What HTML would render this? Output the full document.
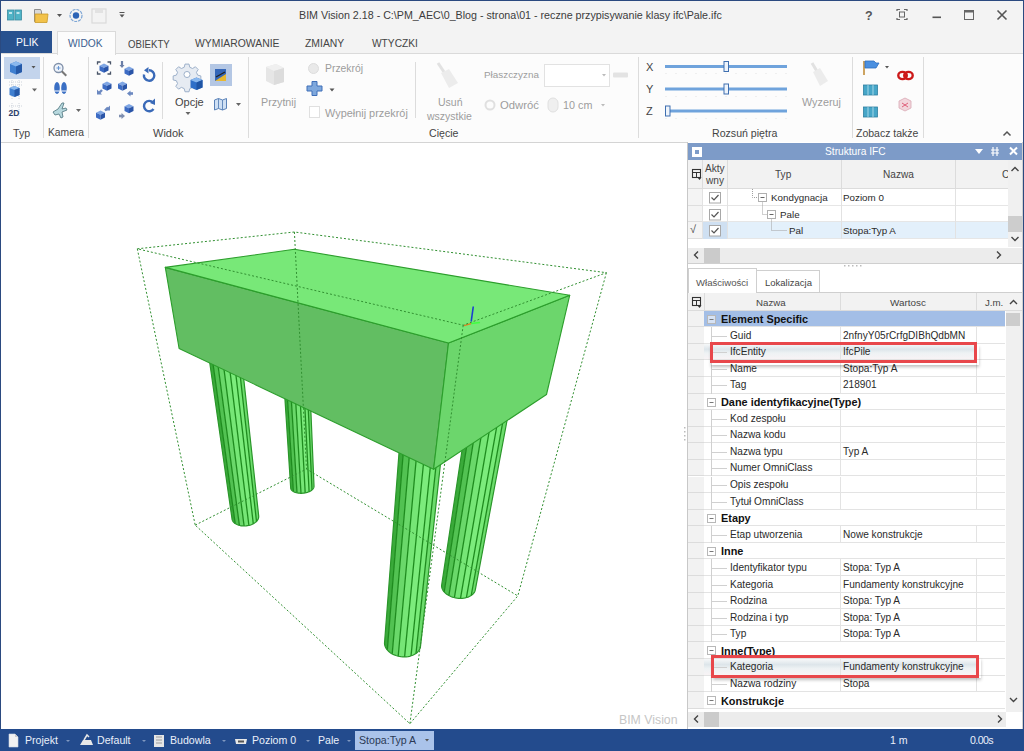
<!DOCTYPE html>
<html><head><meta charset="utf-8">
<style>
*{margin:0;padding:0;box-sizing:border-box}
html,body{width:1024px;height:751px;overflow:hidden;background:#fff;font-family:"Liberation Sans",sans-serif;color:#444}
.a{position:absolute;white-space:nowrap}
svg{position:absolute;overflow:visible}
.tab{position:absolute;top:38px;font-size:10.6px;color:#444;line-height:12px}
.gl{position:absolute;top:127px;font-size:10.6px;color:#444;line-height:12px}
.rt{position:absolute;font-size:10.6px;line-height:12px;color:#444;white-space:nowrap}
.dis{color:#9c9c9c}
.sep{position:absolute;width:1px;background:#dcdcdc}
.g{position:absolute;font-size:10.1px;line-height:12px;color:#2a2a2a;white-space:nowrap}
.gb{position:absolute;font-size:10.9px;line-height:12px;color:#111;font-weight:bold;white-space:nowrap}
.hl{position:absolute;height:1px;background:#e4e4e4}
.vl{position:absolute;width:1px;background:#e4e4e4}
</style></head><body>
<!-- title bar -->
<div class="a" style="left:0;top:0;width:1024px;height:31px;background:#f3f3f3"></div>
<div class="a" style="left:0;top:0;width:1024px;height:1px;background:#2b4a80"></div>
<div class="a" style="left:299px;top:9px;font-size:10.7px;line-height:12px;color:#3c3c3c">BIM Vision 2.18 - C:\PM_AEC\0_Blog - strona\01 - reczne przypisywanie klasy ifc\Pale.ifc</div>
<!-- QAT icons -->
<svg style="left:0;top:0" width="140" height="31">
 <rect x="7.5" y="10" width="6.5" height="10" fill="#4fb3c6" stroke="#3a8aa0" stroke-width="0.8"/>
 <rect x="15" y="10" width="6.5" height="10" fill="#4fb3c6" stroke="#3a8aa0" stroke-width="0.8"/>
 <rect x="9" y="12" width="3" height="2" fill="#bfe6ee"/><rect x="16.5" y="12" width="3" height="2" fill="#bfe6ee"/>
 <path d="M34.5 9.5h6l1 2v10h-7z" fill="#d9d9d9" stroke="#777" stroke-width="0.8"/>
 <path d="M35 14h13l-1 8.5h-12z" fill="#f2c24a" stroke="#c99a2a" stroke-width="0.8"/>
 <path d="M57 14h5l-2.5 3z" fill="#555"/>
 <circle cx="76" cy="15.5" r="6" fill="none" stroke="#7fa7d6" stroke-width="1.2" stroke-dasharray="3 1"/>
 <circle cx="76" cy="15.5" r="3.2" fill="#2b63b6"/>
 <rect x="92" y="9" width="14" height="14" fill="none" stroke="#dadada" stroke-width="1.2"/>
 <rect x="95" y="9" width="8" height="4" fill="#e2e2e2"/>
 <path d="M119.5 12.5h5" stroke="#555" stroke-width="1"/><path d="M119.5 14.5h5l-2.5 3z" fill="#555"/>
</svg>
<!-- window controls -->
<svg style="left:860px;top:6px" width="160" height="20">
 <text x="5" y="13.5" font-family="Liberation Sans" font-weight="bold" font-size="12.5" fill="#555">?</text>
 <path d="M37 5v-1.5h3M44 3.5h3v1.5M47 12v1.5h-3M40 13.5h-3V12" fill="none" stroke="#666" stroke-width="1.2"/>
 <rect x="39.5" y="6" width="5" height="5" fill="none" stroke="#666" stroke-width="1"/>
 <rect x="72.5" y="10.5" width="8.5" height="1.6" fill="#555"/>
 <rect x="104.5" y="4.5" width="9" height="9" fill="none" stroke="#666" stroke-width="1"/>
 <rect x="104.5" y="4.5" width="9" height="2" fill="#666"/>
 <path d="M137.5 4.5l9 9M146.5 4.5l-9 9" stroke="#555" stroke-width="1.6"/>
</svg>
<!-- tab row -->
<div class="a" style="left:0;top:31px;width:1024px;height:22px;background:#f3f3f3"></div>
<div class="a" style="left:0;top:31px;width:52px;height:23px;background:#28518f"></div>
<div class="tab" style="left:16px;top:36.5px;color:#fff;font-size:10.4px">PLIK</div>
<!-- ribbon body -->
<div class="a" style="left:0;top:53px;width:1024px;height:90px;background:#fcfcfc;border-top:1px solid #dadada;border-bottom:1px solid #d4d4d4"></div>
<div class="a" style="left:57px;top:31px;width:59px;height:24px;background:#fcfcfc;border:1px solid #dadada;border-bottom:none"></div>
<div class="tab" style="left:68px;color:#3d5f90;font-size:10.2px">WIDOK</div>
<div class="tab" style="left:128px;font-size:11px;transform:scaleX(0.875);transform-origin:0 0">OBIEKTY</div>
<div class="tab" style="left:195px;font-size:10.4px">WYMIAROWANIE</div>
<div class="tab" style="left:305px;font-size:10.4px">ZMIANY</div>
<div class="tab" style="left:372px;font-size:10.2px">WTYCZKI</div>
<!-- ribbon separators -->
<div class="sep" style="left:43px;top:57px;height:81px"></div>
<div class="sep" style="left:88px;top:57px;height:81px"></div>
<div class="sep" style="left:162px;top:62px;height:57px"></div>
<div class="sep" style="left:248px;top:57px;height:81px"></div>
<div class="sep" style="left:415px;top:62px;height:56px"></div>
<div class="sep" style="left:638px;top:57px;height:81px"></div>
<div class="sep" style="left:852px;top:57px;height:81px"></div>
<div class="sep" style="left:923px;top:57px;height:81px"></div>
<!-- group labels -->
<div class="gl" style="left:13px">Typ</div>
<div class="gl" style="left:48px;font-size:10.3px">Kamera</div>
<div class="gl" style="left:153px;font-size:11px">Widok</div>
<div class="gl" style="left:429px">Cięcie</div>
<div class="gl" style="left:712px">Rozsuń piętra</div>
<div class="gl" style="left:856px;font-size:10.5px">Zobacz także</div>
<svg style="left:1000px;top:128px" width="14" height="10"><path d="M3.5 7.5l3.5-3.5 3.5 3.5" fill="none" stroke="#555" stroke-width="1.5"/></svg>
<!-- Typ group -->
<div class="a" style="left:4px;top:57px;width:36px;height:22px;background:#c3d4ec"></div>
<svg style="left:0;top:55px" width="90" height="70">
 <defs>
  <linearGradient id="cb" x1="0" y1="0" x2="1" y2="1"><stop offset="0" stop-color="#7fb0ea"/><stop offset="1" stop-color="#1f5fb5"/></linearGradient>
 </defs>
 <!-- cube 1 -->
 <path d="M10 9l6-2.5 6 2.5v8l-6 2.5-6-2.5z" fill="#3f7fd0"/>
 <path d="M10 9l6-2.5 6 2.5-6 2.5z" fill="#8ab8ee"/>
 <path d="M16 11.5v8l6-2.5v-8z" fill="#2559a8"/>
 <path d="M31.5 11h4l-2 2.5z" fill="#555"/>
 <!-- cube 2 with grid -->
 <path d="M9 27h13M9 30h13M12 25v20M19 25v20" stroke="#b0b8c8" stroke-width="0.6" stroke-dasharray="1 1"/>
 <path d="M9.5 33l5-2 5 2v7l-5 2-5-2z" fill="#3f7fd0"/>
 <path d="M9.5 33l5-2 5 2-5 2z" fill="#8ab8ee"/>
 <path d="M14.5 35v7l5-2v-7z" fill="#2559a8"/>
 <path d="M32 33.5h5l-2.5 3z" fill="#666"/>
 <!-- 2D -->
 <path d="M9 51h13M12 48v14M19 48v14" stroke="#b0b8c8" stroke-width="0.6" stroke-dasharray="1 1"/>
 <text x="8.5" y="61" font-family="Liberation Sans" font-weight="bold" font-size="8.5" fill="#2a3f6a">2D</text>
 <!-- Kamera -->
 <circle cx="58.5" cy="13" r="4.5" fill="#eef3fa" stroke="#7f8fa8" stroke-width="1.3"/>
 <path d="M61.8 16.3l4.5 4.5" stroke="#777" stroke-width="2"/>
 <path d="M56.5 13h4M58.5 11v4" stroke="#5a8fd0" stroke-width="0.9"/>
 <ellipse cx="57" cy="33" rx="2.8" ry="6" fill="#3a6fc4"/>
 <ellipse cx="64" cy="33" rx="2.8" ry="6" fill="#3a6fc4"/>
 <path d="M54.5 36h5M61.5 36h5" stroke="#fff" stroke-width="1"/>
 <path d="M53 57l5-3 4-6 2 0-2 6 4-1 1 2-5 2 1 5-2 1-2-4-4 1z" fill="#b7d8de" stroke="#5a7f88" stroke-width="0.9"/>
 <path d="M76 54h5l-2.5 3z" fill="#666"/>
</svg>
<!-- Widok group icons -->
<svg style="left:0;top:0" width="260" height="140">
 <defs>
  <g id="cu"><path d="M-4.5 -2.3L0 -4.5L4.5 -2.3L0 -0.2Z" fill="#7fa6e4"/><path d="M-4.5 -2.3L0 -0.2V4.8L-4.5 2.6Z" fill="#3d6cc4"/><path d="M0 -0.2L4.5 -2.3V2.6L0 4.8Z" fill="#2a55a8"/></g>
 </defs>
 <path d="M97.5 64.5v-2.5h3M107.5 62h3v2.5M110.5 71.5v2.5h-3M100.5 74h-3v-2.5" fill="none" stroke="#4a5568" stroke-width="1.3"/>
 <use href="#cu" x="104" y="68"/>
 <path d="M122 61v5" stroke="#6b7fa8" stroke-width="2.2"/><path d="M119.5 65h5l-2.5 3z" fill="#6b7fa8"/>
 <use href="#cu" x="129" y="71"/>
 <path d="M144 74.5a5.2 5.2 0 1 0 5-4.2" fill="none" stroke="#3a6ab8" stroke-width="2.4"/><path d="M148.5 67v6.5l-4.5-3.2z" fill="#3a6ab8"/>
 <use href="#cu" x="107" y="86"/>
 <path d="M102 90l-3 3" stroke="#6b88c0" stroke-width="2.4"/><path d="M97 89.5v5h5z" fill="#6b88c0"/>
 <use href="#cu" x="122.5" y="86"/>
 <path d="M133 93.5h-3" stroke="#6b88c0" stroke-width="2.6"/><path d="M130.5 90.5v6l-3.5-3z" fill="#6b88c0"/>
 <use href="#cu" x="100.5" y="115"/>
 <path d="M105 110.5l3-3" stroke="#6b88c0" stroke-width="2.4"/><path d="M110 105.5v5h-5z" fill="#6b88c0"/>
 <use href="#cu" x="129" y="108.5"/>
 <path d="M119 116h3" stroke="#7f8fb0" stroke-width="2.6"/><path d="M121.5 113v6l3.5-3z" fill="#7f8fb0"/>
 <path d="M153 102.5a5.2 5.2 0 1 0 0.5 6.5" fill="none" stroke="#3a6ab8" stroke-width="2.4"/><path d="M155 98.5v6.5l-5-2z" fill="#3a6ab8"/>
 <!-- gear -->
 <g transform="translate(187,74.5) scale(0.8)">
  <path d="M-2.5 -13h5l1 4 3.5 1.5 3.5-2.2 3.5 3.5-2.2 3.5 1.5 3.5 4 1v5l-4 1-1.5 3.5 2.2 3.5-3.5 3.5-3.5-2.2-3.5 1.5-1 4h-5l-1-4-3.5-1.5-3.5 2.2-3.5-3.5 2.2-3.5-1.5-3.5-4-1v-5l4-1 1.5-3.5-2.2-3.5 3.5-3.5 3.5 2.2 3.5-1.5z" fill="#e6ebf2" stroke="#9aaec8" stroke-width="1.2"/>
  <circle cx="0" cy="0" r="3.8" fill="#fff" stroke="#9aaec8" stroke-width="1.2"/>
 </g>
 <path d="M190.5 80l6-2.5 6 2.5v7.5l-6 2.5-6-2.5z" fill="#2f6fc8"/><path d="M190.5 80l6-2.5 6 2.5-6 2.5z" fill="#8ab8ee"/><path d="M196.5 82.5v7.5l6-2.5v-7.5z" fill="#1f55a5"/>
 <!-- highlighted icon -->
 <rect x="210" y="64" width="22" height="22" fill="#b4c7e4"/>
 <path d="M215 69h11v12h-11z" fill="#3466b8"/>
 <path d="M215 81l11-7v7z" fill="#e8b830"/>
 <path d="M216 77l9-5" stroke="#222" stroke-width="1.3"/>
 <!-- map icon -->
 <path d="M214.5 100l4-1.5 4 1.5 4-1.5v10l-4 1.5-4-1.5-4 1.5z" fill="#cfe0f4" stroke="#5a82b8" stroke-width="1"/>
 <path d="M218.5 98.5v10M222.5 100v10" stroke="#5a82b8" stroke-width="0.9"/>
 <path d="M236 103h5l-2.5 3z" fill="#666"/>
 <path d="M185.5 112h5l-2.5 3z" fill="#666"/>
</svg>
<div class="rt" style="left:175px;top:96px;font-size:11px">Opcje</div>
<!-- Cięcie group -->
<svg style="left:250px;top:55px" width="390" height="70">
 <path d="M16 12l10-3 8 4v14l-10 3-8-4z" fill="#e6e6e6"/>
 <path d="M16 12l10-3 8 4-10 3z" fill="#f0f0f0"/><path d="M24 16v14l10-3v-14z" fill="#dcdcdc"/>
 <circle cx="63.5" cy="13.5" r="5" fill="#e9e9e9" stroke="#dddddd" stroke-width="1"/>
 <path d="M57 31h5v-4.5h5v4.5h5v5h-5v4.5h-5v-4.5h-5z" fill="#7fa8dc" stroke="#3f6fb8" stroke-width="1"/>
 <path d="M79.5 33.5h5l-2.5 3z" fill="#555"/>
 <rect x="59.5" y="51.5" width="10" height="11" fill="#fff" stroke="#e0e0e0"/>
 <!-- broom -->
 <path d="M188 8l8 12" stroke="#e2e2e2" stroke-width="3"/>
 <path d="M191 18l8-4 9 14-9 5z" fill="#ececec"/>
 <!-- Płaszczyzna combo -->
 <rect x="294.5" y="9.5" width="65" height="22" fill="#fff" stroke="#e2e2e2"/>
 <path d="M352 19h4l-2 2.5z" fill="#bbb"/>
 <rect x="363" y="17.5" width="15" height="5" rx="1" fill="#e3e3e3"/>
 <!-- odwroc icon -->
 <circle cx="240" cy="50" r="4.5" fill="none" stroke="#e0e0e0" stroke-width="2"/>
 <!-- mouse icon -->
 <rect x="298" y="43" width="10" height="14" rx="5" fill="#efefef" stroke="#e0e0e0"/>
 <path d="M351 49h4l-2 2.5z" fill="#bbb"/>
</svg>
<div class="rt dis" style="left:261px;top:96px;font-size:10.7px">Przytnij</div>
<div class="rt dis" style="left:325px;top:63px;font-size:10.4px">Przekrój</div>
<div class="rt dis" style="left:325px;top:107px;font-size:10.9px">Wypełnij przekrój</div>
<div class="rt dis" style="left:438px;top:96px;font-size:10.5px">Usuń</div>
<div class="rt dis" style="left:427px;top:110px;font-size:10.5px">wszystkie</div>
<div class="rt dis" style="left:484px;top:69px;font-size:9.9px">Płaszczyzna</div>
<div class="rt dis" style="left:500px;top:99px;font-size:11.3px">Odwróć</div>
<div class="rt dis" style="left:563px;top:99px;font-size:10.8px">10 cm</div>
<!-- Rozsuń piętra -->
<div class="rt" style="left:646px;top:61px;font-size:11px">X</div>
<div class="rt" style="left:646px;top:83px;font-size:11px">Y</div>
<div class="rt" style="left:646px;top:105px;font-size:11px">Z</div>
<svg style="left:660px;top:55px" width="190" height="70">
 <g stroke="#e3e3e3" stroke-width="1" stroke-dasharray="1 9">
  <path d="M5.5 18.5h122M5.5 41.5h122M5.5 63.5h122"/>
 </g>
 <rect x="5" y="10" width="122" height="3" fill="#6fa3dc"/>
 <rect x="5" y="32.5" width="122" height="3" fill="#6fa3dc"/>
 <rect x="5" y="54.5" width="122" height="3" fill="#6fa3dc"/>
 <rect x="64" y="6.5" width="4.5" height="10" fill="#eef4fb" stroke="#3f6fb0" stroke-width="1"/>
 <rect x="64" y="29" width="4.5" height="10" fill="#eef4fb" stroke="#3f6fb0" stroke-width="1"/>
 <rect x="5.5" y="51" width="4.5" height="10" fill="#eef4fb" stroke="#3f6fb0" stroke-width="1"/>
 <!-- wyzeruj broom -->
 <path d="M152 8l6 10" stroke="#e2e2e2" stroke-width="3"/>
 <path d="M153 17l7-4 8 13-8 5z" fill="#ececec"/>
</svg>
<div class="rt dis" style="left:802px;top:96px;font-size:10.8px">Wyzeruj</div>
<!-- Zobacz także -->
<svg style="left:855px;top:55px" width="70" height="70">
 <path d="M9 6v14" stroke="#c89a50" stroke-width="1.8"/>
 <path d="M10 6h9l2 2h3l-3 5h-11z" fill="#4a8fe0" stroke="#2f6fc0" stroke-width="0.8"/>
 <path d="M30 11h4l-2 2.5z" fill="#555"/>
 <ellipse cx="47.5" cy="20.5" rx="4.2" ry="3.6" fill="none" stroke="#cc1a1a" stroke-width="2.4"/><ellipse cx="53.5" cy="20.5" rx="4.2" ry="3.6" fill="none" stroke="#cc1a1a" stroke-width="2.4"/><rect x="48.5" y="19.3" width="4" height="2.4" fill="#cc1a1a"/>
 <rect x="8.5" y="30" width="14" height="10" fill="#46a6c8" stroke="#2f7fa0" stroke-width="0.8"/>
 <path d="M13 30v10M18 30v10" stroke="#bde4f0" stroke-width="0.8"/>
 <rect x="8.5" y="52" width="14" height="10" fill="#46a6c8" stroke="#2f7fa0" stroke-width="0.8"/>
 <path d="M13 52v10M18 52v10" stroke="#bde4f0" stroke-width="0.8"/>
 <path d="M44 46l6-3 6 3v7l-6 3-6-3z" fill="#f2d6dc" stroke="#d8a8b4" stroke-width="0.8"/>
 <path d="M47 48l6 4M53 48l-6 4" stroke="#e0607a" stroke-width="1"/>
</svg>
<!-- 3D viewport -->
<svg style="left:0;top:0" width="686" height="729" viewBox="0 0 686 729">
 <!-- piles -->
<path d="M207.5 347.0 L210.9 348.6 L235.2 523.6 L233.9 522.5 L233.0 521.3 L232.3 520.1 L232.0 518.7Z" fill="#3aaa3a"/>
<path d="M210.9 348.6 L216.1 351.0 L239.4 525.4 L238.2 525.1 L237.1 524.6 L236.1 524.1 L235.2 523.6Z" fill="#52c252"/>
<path d="M216.1 351.0 L222.0 353.7 L244.1 526.0 L242.9 526.0 L241.7 525.9 L240.5 525.7 L239.4 525.4Z" fill="#6ad86a"/>
<path d="M222.0 353.7 L228.2 356.6 L248.9 525.5 L247.7 525.7 L246.5 525.9 L245.3 526.0 L244.1 526.0Z" fill="#76e676"/>
<path d="M228.2 356.6 L234.1 359.3 L253.3 523.8 L252.3 524.3 L251.2 524.8 L250.0 525.1 L248.9 525.5Z" fill="#7cec7c"/>
<path d="M234.1 359.3 L238.6 361.4 L256.5 521.4 L255.9 522.1 L255.1 522.7 L254.2 523.3 L253.3 523.8Z" fill="#78ea78"/>
<path d="M238.6 361.4 L242.0 363.0 L258.7 516.0 L258.7 517.4 L258.3 518.8 L257.6 520.1 L256.5 521.4Z" fill="#6cdc6c"/>
<path d="M210.9 348.6L235.2 523.6M216.1 351.0L239.4 525.4M222.0 353.7L244.1 526.0M228.2 356.6L248.9 525.5M234.1 359.3L253.3 523.8M238.6 361.4L256.5 521.4" stroke="#1e8c1e" stroke-width="1.3" fill="none"/>
<path d="M207.5 347.0 L232.0 518.7 L232.1 519.5 L232.4 520.3 L232.8 521.1 L233.3 521.9 L234.0 522.6 L234.7 523.2 L235.6 523.8 L236.5 524.3 L237.5 524.8 L238.7 525.2 L239.8 525.5 L241.0 525.8 L242.3 525.9 L243.6 526.0 L244.9 526.0 L246.2 525.9 L247.5 525.7 L248.8 525.5 L250.1 525.1 L251.3 524.7 L252.4 524.2 L253.5 523.7 L254.5 523.1 L255.4 522.4 L256.2 521.7 L256.9 521.0 L257.5 520.2 L258.0 519.4 L258.4 518.5 L258.6 517.7 L258.7 516.8 L258.7 516.0 L242.0 363.0" stroke="#2a962a" stroke-width="1.2" fill="none"/>
<path d="M284.5 392.0 L287.1 393.0 L293.4 491.5 L292.3 490.8 L291.5 489.9 L290.9 489.0 L290.7 488.0Z" fill="#3aaa3a"/>
<path d="M287.1 393.0 L291.0 394.5 L297.0 492.9 L296.0 492.6 L295.0 492.3 L294.1 491.9 L293.4 491.5Z" fill="#52c252"/>
<path d="M291.0 394.5 L295.4 396.2 L301.0 493.3 L300.0 493.3 L298.9 493.2 L297.9 493.1 L297.0 492.9Z" fill="#6ad86a"/>
<path d="M295.4 396.2 L300.1 398.0 L305.2 492.9 L304.2 493.1 L303.1 493.2 L302.1 493.3 L301.0 493.3Z" fill="#76e676"/>
<path d="M300.1 398.0 L304.5 399.7 L309.1 491.7 L308.2 492.1 L307.2 492.4 L306.2 492.7 L305.2 492.9Z" fill="#7cec7c"/>
<path d="M304.5 399.7 L307.9 401.0 L312.0 489.9 L311.4 490.4 L310.7 490.9 L309.9 491.3 L309.1 491.7Z" fill="#78ea78"/>
<path d="M307.9 401.0 L310.5 402.0 L314.0 486.0 L313.9 487.0 L313.6 488.0 L312.9 489.0 L312.0 489.9Z" fill="#6cdc6c"/>
<path d="M287.1 393.0L293.4 491.5M291.0 394.5L297.0 492.9M295.4 396.2L301.0 493.3M300.1 398.0L305.2 492.9M304.5 399.7L309.1 491.7M307.9 401.0L312.0 489.9" stroke="#1e8c1e" stroke-width="1.3" fill="none"/>
<path d="M284.5 392.0 L290.7 488.0 L290.8 488.6 L291.0 489.2 L291.4 489.8 L291.8 490.3 L292.3 490.8 L293.0 491.3 L293.7 491.7 L294.5 492.1 L295.4 492.4 L296.3 492.7 L297.3 493.0 L298.4 493.1 L299.5 493.2 L300.6 493.3 L301.7 493.3 L302.9 493.2 L304.0 493.1 L305.1 492.9 L306.2 492.7 L307.3 492.4 L308.3 492.0 L309.3 491.6 L310.2 491.2 L311.0 490.7 L311.7 490.2 L312.3 489.6 L312.9 489.1 L313.3 488.5 L313.7 487.8 L313.9 487.2 L314.0 486.6 L314.0 486.0 L310.5 402.0" stroke="#2a962a" stroke-width="1.2" fill="none"/>
<path d="M400.0 440.0 L404.2 441.0 L387.3 649.9 L385.9 648.1 L385.0 646.1 L384.6 644.0 L384.6 642.0Z" fill="#3aaa3a"/>
<path d="M404.2 441.0 L410.5 442.5 L392.2 653.9 L390.8 653.1 L389.5 652.1 L388.3 651.1 L387.3 649.9Z" fill="#52c252"/>
<path d="M410.5 442.5 L417.6 444.2 L398.2 656.2 L396.6 655.8 L395.1 655.2 L393.6 654.6 L392.2 653.9Z" fill="#6ad86a"/>
<path d="M417.6 444.2 L425.2 446.0 L404.6 656.9 L403.0 656.9 L401.4 656.8 L399.8 656.5 L398.2 656.2Z" fill="#76e676"/>
<path d="M425.2 446.0 L432.3 447.7 L411.0 655.9 L409.4 656.3 L407.9 656.6 L406.3 656.8 L404.6 656.9Z" fill="#7cec7c"/>
<path d="M432.3 447.7 L437.8 449.0 L416.0 653.5 L414.9 654.2 L413.6 654.9 L412.3 655.4 L411.0 655.9Z" fill="#78ea78"/>
<path d="M437.8 449.0 L442.0 450.0 L420.5 646.4 L420.0 648.4 L419.1 650.2 L417.7 652.0 L416.0 653.5Z" fill="#6cdc6c"/>
<path d="M404.2 441.0L387.3 649.9M410.5 442.5L392.2 653.9M417.6 444.2L398.2 656.2M425.2 446.0L404.6 656.9M432.3 447.7L411.0 655.9M437.8 449.0L416.0 653.5" stroke="#1e8c1e" stroke-width="1.3" fill="none"/>
<path d="M400.0 440.0 L384.6 642.0 L384.5 643.2 L384.6 644.5 L384.9 645.7 L385.4 647.0 L386.0 648.2 L386.8 649.3 L387.7 650.4 L388.8 651.5 L390.0 652.5 L391.3 653.4 L392.7 654.2 L394.3 654.9 L395.9 655.5 L397.5 656.0 L399.3 656.4 L401.0 656.7 L402.8 656.9 L404.5 656.9 L406.3 656.8 L408.0 656.6 L409.7 656.3 L411.2 655.8 L412.8 655.3 L414.2 654.6 L415.5 653.8 L416.6 653.0 L417.7 652.0 L418.5 651.0 L419.3 649.9 L419.9 648.8 L420.3 647.6 L420.5 646.4 L442.0 450.0" stroke="#2a962a" stroke-width="1.2" fill="none"/>
<path d="M464.0 437.0 L468.5 434.3 L444.2 592.0 L443.0 590.3 L442.1 588.5 L441.7 586.7 L441.7 584.9Z" fill="#3aaa3a"/>
<path d="M468.5 434.3 L475.2 430.2 L448.9 595.6 L447.5 594.8 L446.3 593.9 L445.2 593.0 L444.2 592.0Z" fill="#52c252"/>
<path d="M475.2 430.2 L482.9 425.7 L454.4 597.7 L453.0 597.3 L451.5 596.8 L450.2 596.2 L448.9 595.6Z" fill="#6ad86a"/>
<path d="M482.9 425.7 L491.0 420.8 L460.5 598.4 L459.0 598.4 L457.4 598.2 L455.9 598.0 L454.4 597.7Z" fill="#76e676"/>
<path d="M491.0 420.8 L498.6 416.2 L466.4 597.6 L465.0 598.0 L463.6 598.2 L462.0 598.3 L460.5 598.4Z" fill="#7cec7c"/>
<path d="M498.6 416.2 L504.5 412.7 L471.2 595.5 L470.1 596.1 L469.0 596.7 L467.7 597.2 L466.4 597.6Z" fill="#78ea78"/>
<path d="M504.5 412.7 L509.0 410.0 L475.4 589.3 L475.0 591.0 L474.1 592.7 L472.8 594.2 L471.2 595.5Z" fill="#6cdc6c"/>
<path d="M468.5 434.3L444.2 592.0M475.2 430.2L448.9 595.6M482.9 425.7L454.4 597.7M491.0 420.8L460.5 598.4M498.6 416.2L466.4 597.6M504.5 412.7L471.2 595.5" stroke="#1e8c1e" stroke-width="1.3" fill="none"/>
<path d="M464.0 437.0 L441.7 584.9 L441.6 586.0 L441.7 587.1 L442.0 588.2 L442.4 589.3 L443.0 590.4 L443.7 591.4 L444.6 592.4 L445.6 593.4 L446.7 594.3 L448.0 595.1 L449.3 595.8 L450.8 596.5 L452.3 597.1 L453.8 597.5 L455.5 597.9 L457.1 598.2 L458.8 598.3 L460.4 598.4 L462.1 598.3 L463.7 598.2 L465.2 597.9 L466.7 597.5 L468.1 597.1 L469.4 596.5 L470.7 595.8 L471.8 595.1 L472.7 594.3 L473.6 593.4 L474.3 592.4 L474.8 591.4 L475.2 590.4 L475.4 589.3 L509.0 410.0" stroke="#2a962a" stroke-width="1.2" fill="none"/>
 <!-- pile cap box -->
 <g stroke="#2c9e2c" stroke-width="1.1" stroke-linejoin="round">
  <path d="M165.3 267.4L448.5 343L433.6 469.3L179.1 348.5Z" fill="#62be62"/>
  <path d="M448.5 343L569.7 295.3L546.5 394.5L433.6 469.3Z" fill="#6cd66c"/>
  <path d="M165.3 267.4L294.4 249.3L569.7 295.3L448.5 343Z" fill="#78e878"/>
 </g>
 <!-- axis gizmo -->
 <path d="M473.3 306.5L471.2 321.5" stroke="#1a3fd0" stroke-width="1.6"/>
 <path d="M471 323.5L464 325.5" stroke="#e08020" stroke-width="1.3"/>
 <path d="M471 323.5L480 322.5" stroke="#40ff40" stroke-width="1.3"/>
 <!-- bounding box dashed -->
 <g stroke="#319031" stroke-width="1" stroke-dasharray="2 2" fill="none">
  <path d="M137.3 248.8L294.4 232L606.4 272.7L463.2 325.2Z"/>
  <path d="M195.2 525.1L306.5 469L517.8 595.9L409.9 723.7Z"/>
  <path d="M137.3 248.8L195.2 525.1M294.4 232L306.5 469M606.4 272.7L517.8 595.9M463.2 325.2L409.9 723.7"/>
 </g>
</svg>
<div class="a" style="left:619px;top:713px;font-size:12.3px;line-height:14px;color:#c6c6c6">BIM Vision</div>
<!-- right panel -->
<div class="a" style="left:687px;top:142px;width:336px;height:587px;background:#fff"></div>
<div class="a" style="left:687px;top:142px;width:1px;height:587px;background:#c8c8c8"></div>
<div class="a" style="left:1022px;top:142px;width:1px;height:587px;background:#d0d0d0"></div>
<div class="a" style="left:1023px;top:0;width:1px;height:751px;background:#2b4a80"></div>
<div class="a" style="left:0;top:0;width:1px;height:751px;background:#2b4a80"></div>
<svg style="left:683px;top:426px" width="6" height="18"><g fill="#bbb"><rect x="1" y="1" width="1.5" height="1.5"/><rect x="1" y="5" width="1.5" height="1.5"/><rect x="1" y="9" width="1.5" height="1.5"/><rect x="1" y="13" width="1.5" height="1.5"/></g></svg>
<div class="a" style="left:688px;top:143px;width:334px;height:17px;background:#7d9bc8"></div>
<div class="a" style="left:692px;top:147px;width:10px;height:10px;background:#fff"></div>
<div class="a" style="left:695px;top:150px;width:4px;height:4px;background:#7d9bc8"></div>
<div class="rt" style="left:825px;top:146px;color:#fff;font-size:10.2px">Struktura IFC</div>
<svg style="left:970px;top:143px" width="52" height="17"><path d="M5 6h8l-4 5z" fill="#fff"/><path d="M23 4v9M27 4v9M21 7h8M21 10h8" stroke="#fff" stroke-width="1.2"/><path d="M40 4.5l7 7M47 4.5l-7 7" stroke="#fff" stroke-width="2"/></svg>
<div class="a" style="left:688px;top:160px;width:320px;height:29px;background:#f2f2f2;border-bottom:1px solid #dcdcdc"></div>
<div class="vl" style="left:702px;top:160px;height:79px;background:#dcdcdc"></div>
<div class="vl" style="left:727px;top:160px;height:79px;background:#dcdcdc"></div>
<div class="vl" style="left:841px;top:160px;height:79px;background:#dcdcdc"></div>
<div class="vl" style="left:955px;top:160px;height:79px;background:#dcdcdc"></div>
<svg style="left:691px;top:168px" width="12" height="14"><rect x="1.5" y="1.5" width="8" height="8" fill="none" stroke="#333" stroke-width="1.1"/><path d="M1.5 4.5h8M5.5 4.5v5" stroke="#333" stroke-width="1"/><path d="M6.5 9.5h4l-2 2.5z" fill="#333"/></svg>
<div class="g" style="left:705px;top:163px;color:#444;line-height:12px">Akty</div>
<div class="g" style="left:706px;top:175px;color:#444;line-height:12px">wny</div>
<div class="g" style="left:775px;top:169px;color:#444">Typ</div>
<div class="g" style="left:883px;top:169px;color:#444">Nazwa</div>
<div class="g" style="left:1002px;top:169px;color:#444">C</div>
<div class="a" style="left:703px;top:189px;width:305px;height:16.5px;background:#fff;border-bottom:1px solid #e6e6e6"></div>
<div class="a" style="left:688px;top:189px;width:14px;height:16.5px;background:#f4f4f4;border-bottom:1px solid #dedede"></div>
<svg style="left:709px;top:192px" width="14" height="12"><rect x="0.5" y="0.5" width="11" height="10.5" fill="#fff" stroke="#a8a8a8"/><path d="M2.5 5.5l2.5 2.5 4.5-5" fill="none" stroke="#555" stroke-width="1.2"/></svg>
<div class="a" style="left:703px;top:205.5px;width:305px;height:16.5px;background:#fff;border-bottom:1px solid #e6e6e6"></div>
<div class="a" style="left:688px;top:205.5px;width:14px;height:16.5px;background:#f4f4f4;border-bottom:1px solid #dedede"></div>
<svg style="left:709px;top:208.5px" width="14" height="12"><rect x="0.5" y="0.5" width="11" height="10.5" fill="#fff" stroke="#a8a8a8"/><path d="M2.5 5.5l2.5 2.5 4.5-5" fill="none" stroke="#555" stroke-width="1.2"/></svg>
<div class="a" style="left:703px;top:222px;width:305px;height:16.5px;background:#e3f0fb;border-bottom:1px solid #e6e6e6"></div>
<div class="a" style="left:688px;top:222px;width:14px;height:16.5px;background:#f4f4f4;border-bottom:1px solid #dedede"></div>
<svg style="left:709px;top:225px" width="14" height="12"><rect x="0.5" y="0.5" width="11" height="10.5" fill="#fff" stroke="#a8a8a8"/><path d="M2.5 5.5l2.5 2.5 4.5-5" fill="none" stroke="#555" stroke-width="1.2"/></svg>
<div class="a" style="left:703px;top:222px;width:24px;height:16.5px;background:#cfe0f2"></div>
<svg style="left:709px;top:225px" width="14" height="12"><rect x="0.5" y="0.5" width="11" height="10.5" fill="#fff" stroke="#a8a8a8"/><path d="M2.5 5.5l2.5 2.5 4.5-5" fill="none" stroke="#555" stroke-width="1.2"/></svg>
<div class="vl" style="left:702px;top:189px;height:50px;background:#e2e2e2"></div>
<div class="vl" style="left:727px;top:189px;height:50px;background:#e2e2e2"></div>
<div class="vl" style="left:841px;top:189px;height:50px;background:#e2e2e2"></div>
<div class="vl" style="left:955px;top:189px;height:50px;background:#e2e2e2"></div>
<div class="rt" style="left:690px;top:223px;font-size:11px;color:#444">&#8730;</div>
<svg style="left:740px;top:189px" width="60" height="50"><g stroke="#a0a0a0" stroke-width="1" stroke-dasharray="1 1" fill="none"><path d="M12.5 0v8.5h6M22.5 12.5v13h5M31.5 29.5v12h16"/></g><rect x="18.5" y="4.5" width="8" height="8" fill="#fff" stroke="#b0b0b0"/><path d="M20.5 8.5h4" stroke="#666"/><rect x="27.5" y="21.5" width="8" height="8" fill="#fff" stroke="#b0b0b0"/><path d="M29.5 25.5h4" stroke="#666"/></svg>
<div class="g" style="left:771px;top:192px;font-size:9.8px">Kondygnacja</div>
<div class="g" style="left:780px;top:209px;font-size:9.8px">Pale</div>
<div class="g" style="left:789px;top:225px;font-size:9.8px">Pal</div>
<div class="g" style="left:843px;top:192px;font-size:9.8px">Poziom 0</div>
<div class="g" style="left:843px;top:225px;font-size:9.8px">Stopa:Typ A</div>
<div class="a" style="left:1008px;top:160px;width:14px;height:87px;background:#f0f0f0"></div>
<div class="a" style="left:1008px;top:215.5px;width:14px;height:16px;background:#cdcdcd"></div>
<svg style="left:1008px;top:160px" width="14" height="87"><path d="M3.5 11l3.5-3.5 3.5 3.5" fill="none" stroke="#444" stroke-width="1.4"/><path d="M3.5 77l3.5 3.5 3.5-3.5" fill="none" stroke="#444" stroke-width="1.4"/></svg>
<div class="a" style="left:688px;top:247.5px;width:334px;height:15.5px;background:#ececec"></div>
<div class="a" style="left:704px;top:247.5px;width:16px;height:15.5px;background:#cbcbcb"></div>
<svg style="left:688px;top:247px" width="320" height="16"><path d="M10 4.5l-3.5 3.5 3.5 3.5" fill="none" stroke="#444" stroke-width="1.4"/><path d="M309 4.5l3.5 3.5-3.5 3.5" fill="none" stroke="#444" stroke-width="1.4"/></svg>
<div class="a" style="left:688px;top:263px;width:334px;height:1px;background:#cfcfcf"></div>
<svg style="left:843px;top:264px" width="20" height="4"><g fill="#bbb"><rect x="1" y="1" width="1.5" height="1.5"/><rect x="5" y="1" width="1.5" height="1.5"/><rect x="9" y="1" width="1.5" height="1.5"/><rect x="13" y="1" width="1.5" height="1.5"/><rect x="17" y="1" width="1.5" height="1.5"/></g></svg>
<div class="a" style="left:688px;top:292px;width:334px;height:1px;background:#cfcfcf"></div>
<div class="a" style="left:688px;top:268px;width:69px;height:25px;background:#fff;border:1px solid #cfcfcf;border-bottom:none"></div>
<div class="a" style="left:757px;top:270px;width:63px;height:22px;background:#fff;border:1px solid #cfcfcf;border-left:none;border-bottom:none"></div>
<div class="g" style="left:696px;top:276.5px;color:#555;font-size:9.6px">Właściwości</div>
<div class="g" style="left:765px;top:277px;color:#444;font-size:9.5px">Lokalizacja</div>
<div class="a" style="left:688px;top:293px;width:334px;height:17.5px;background:#f2f2f2;border-bottom:1px solid #dcdcdc"></div>
<svg style="left:691px;top:296px" width="12" height="14"><rect x="1.5" y="1.5" width="8" height="8" fill="none" stroke="#333" stroke-width="1.1"/><path d="M1.5 4.5h8M5.5 4.5v5" stroke="#333" stroke-width="1"/><path d="M6.5 9.5h4l-2 2.5z" fill="#333"/></svg>
<div class="vl" style="left:704px;top:293px;height:18px;background:#dcdcdc"></div>
<div class="vl" style="left:840px;top:293px;height:18px;background:#dcdcdc"></div>
<div class="vl" style="left:976px;top:293px;height:18px;background:#dcdcdc"></div>
<div class="g" style="left:756px;top:297px;color:#444;font-size:9.7px">Nazwa</div>
<div class="g" style="left:890px;top:297px;color:#444;font-size:9.9px">Wartosc</div>
<div class="g" style="left:985px;top:297px;color:#444;font-size:9.7px">J.m.</div>
<svg style="left:1006px;top:293px" width="16" height="18"><path d="M4 11l3.5-3.5 3.5 3.5" fill="none" stroke="#444" stroke-width="1.4"/></svg>
<div class="a" style="left:688px;top:310.6px;width:16px;height:16.59px;background:#f2f2f2;border-bottom:1px solid #dcdcdc"></div>
<div class="a" style="left:704px;top:310.6px;width:301px;height:16.59px;background:#a3bee6;border-bottom:1px solid #e3e3e3"></div>
<svg style="left:704px;top:310.6px" width="16" height="17"><rect x="3.5" y="4.5" width="8" height="8" fill="#d6e2f4" stroke="#b8b8b8"/><path d="M5.5 8.5h4" stroke="#777"/></svg>
<div class="gb" style="left:721px;top:313.1px">Element Specific</div>
<div class="a" style="left:688px;top:327.19px;width:16px;height:16.59px;background:#f2f2f2;border-bottom:1px solid #dcdcdc"></div>
<div class="a" style="left:704px;top:327.19px;width:301px;height:16.59px;background:#fff;border-bottom:1px solid #e3e3e3"></div>
<div class="vl" style="left:840px;top:327.19px;height:16.59px;background:#e3e3e3"></div>
<div class="vl" style="left:976px;top:327.19px;height:16.59px;background:#e3e3e3"></div>
<div class="a" style="left:711px;top:327.19px;width:1px;height:16.59px;background:#d0d0d0"></div>
<div class="a" style="left:711px;top:335.69px;width:16px;height:1px;background:#d0d0d0"></div>
<div class="g" style="left:730px;top:329.69px">Guid</div>
<div class="g" style="left:843px;top:329.69px">2nfnyY05rCrfgDIBhQdbMN</div>
<div class="a" style="left:688px;top:343.78px;width:16px;height:16.59px;background:#f2f2f2;border-bottom:1px solid #dcdcdc"></div>
<div class="a" style="left:704px;top:343.78px;width:301px;height:16.59px;background:linear-gradient(#f6f8f9,#dde5ea 35%,#eef2f4 60%,#f8f3f5) 0 0/273px 100% no-repeat,#fff;border-bottom:1px solid #e3e3e3"></div>
<div class="vl" style="left:840px;top:343.78px;height:16.59px;background:#e3e3e3"></div>
<div class="vl" style="left:976px;top:343.78px;height:16.59px;background:#e3e3e3"></div>
<div class="a" style="left:711px;top:343.78px;width:1px;height:16.59px;background:#d0d0d0"></div>
<div class="a" style="left:711px;top:352.28px;width:16px;height:1px;background:#d0d0d0"></div>
<div class="g" style="left:730px;top:346.28px">IfcEntity</div>
<div class="g" style="left:843px;top:346.28px">IfcPile</div>
<div class="a" style="left:688px;top:360.37px;width:16px;height:16.59px;background:#f2f2f2;border-bottom:1px solid #dcdcdc"></div>
<div class="a" style="left:704px;top:360.37px;width:301px;height:16.59px;background:#fff;border-bottom:1px solid #e3e3e3"></div>
<div class="vl" style="left:840px;top:360.37px;height:16.59px;background:#e3e3e3"></div>
<div class="vl" style="left:976px;top:360.37px;height:16.59px;background:#e3e3e3"></div>
<div class="a" style="left:711px;top:360.37px;width:1px;height:16.59px;background:#d0d0d0"></div>
<div class="a" style="left:711px;top:368.87px;width:16px;height:1px;background:#d0d0d0"></div>
<div class="g" style="left:730px;top:362.87px">Name</div>
<div class="g" style="left:843px;top:362.87px">Stopa:Typ A</div>
<div class="a" style="left:688px;top:376.96px;width:16px;height:16.59px;background:#f2f2f2;border-bottom:1px solid #dcdcdc"></div>
<div class="a" style="left:704px;top:376.96px;width:301px;height:16.59px;background:#fff;border-bottom:1px solid #e3e3e3"></div>
<div class="vl" style="left:840px;top:376.96px;height:16.59px;background:#e3e3e3"></div>
<div class="vl" style="left:976px;top:376.96px;height:16.59px;background:#e3e3e3"></div>
<div class="a" style="left:711px;top:376.96px;width:1px;height:16.59px;background:#d0d0d0"></div>
<div class="a" style="left:711px;top:385.46px;width:16px;height:1px;background:#d0d0d0"></div>
<div class="g" style="left:730px;top:379.46px">Tag</div>
<div class="g" style="left:843px;top:379.46px">218901</div>
<div class="a" style="left:688px;top:393.55px;width:16px;height:16.59px;background:#f2f2f2;border-bottom:1px solid #dcdcdc"></div>
<div class="a" style="left:704px;top:393.55px;width:301px;height:16.59px;background:#fff;border-bottom:1px solid #e3e3e3"></div>
<svg style="left:704px;top:393.55px" width="16" height="17"><rect x="3.5" y="4.5" width="8" height="8" fill="#fff" stroke="#b8b8b8"/><path d="M5.5 8.5h4" stroke="#777"/></svg>
<div class="gb" style="left:721px;top:396.05px">Dane identyfikacyjne(Type)</div>
<div class="a" style="left:688px;top:410.14px;width:16px;height:16.59px;background:#f2f2f2;border-bottom:1px solid #dcdcdc"></div>
<div class="a" style="left:704px;top:410.14px;width:301px;height:16.59px;background:#fff;border-bottom:1px solid #e3e3e3"></div>
<div class="vl" style="left:840px;top:410.14px;height:16.59px;background:#e3e3e3"></div>
<div class="vl" style="left:976px;top:410.14px;height:16.59px;background:#e3e3e3"></div>
<div class="a" style="left:711px;top:410.14px;width:1px;height:16.59px;background:#d0d0d0"></div>
<div class="a" style="left:711px;top:418.64px;width:16px;height:1px;background:#d0d0d0"></div>
<div class="g" style="left:730px;top:412.64px">Kod zespołu</div>
<div class="a" style="left:688px;top:426.73px;width:16px;height:16.59px;background:#f2f2f2;border-bottom:1px solid #dcdcdc"></div>
<div class="a" style="left:704px;top:426.73px;width:301px;height:16.59px;background:#fff;border-bottom:1px solid #e3e3e3"></div>
<div class="vl" style="left:840px;top:426.73px;height:16.59px;background:#e3e3e3"></div>
<div class="vl" style="left:976px;top:426.73px;height:16.59px;background:#e3e3e3"></div>
<div class="a" style="left:711px;top:426.73px;width:1px;height:16.59px;background:#d0d0d0"></div>
<div class="a" style="left:711px;top:435.23px;width:16px;height:1px;background:#d0d0d0"></div>
<div class="g" style="left:730px;top:429.23px">Nazwa kodu</div>
<div class="a" style="left:688px;top:443.32px;width:16px;height:16.59px;background:#f2f2f2;border-bottom:1px solid #dcdcdc"></div>
<div class="a" style="left:704px;top:443.32px;width:301px;height:16.59px;background:#fff;border-bottom:1px solid #e3e3e3"></div>
<div class="vl" style="left:840px;top:443.32px;height:16.59px;background:#e3e3e3"></div>
<div class="vl" style="left:976px;top:443.32px;height:16.59px;background:#e3e3e3"></div>
<div class="a" style="left:711px;top:443.32px;width:1px;height:16.59px;background:#d0d0d0"></div>
<div class="a" style="left:711px;top:451.82px;width:16px;height:1px;background:#d0d0d0"></div>
<div class="g" style="left:730px;top:445.82px">Nazwa typu</div>
<div class="g" style="left:843px;top:445.82px">Typ A</div>
<div class="a" style="left:688px;top:459.91px;width:16px;height:16.59px;background:#f2f2f2;border-bottom:1px solid #dcdcdc"></div>
<div class="a" style="left:704px;top:459.91px;width:301px;height:16.59px;background:#fff;border-bottom:1px solid #e3e3e3"></div>
<div class="vl" style="left:840px;top:459.91px;height:16.59px;background:#e3e3e3"></div>
<div class="vl" style="left:976px;top:459.91px;height:16.59px;background:#e3e3e3"></div>
<div class="a" style="left:711px;top:459.91px;width:1px;height:16.59px;background:#d0d0d0"></div>
<div class="a" style="left:711px;top:468.41px;width:16px;height:1px;background:#d0d0d0"></div>
<div class="g" style="left:730px;top:462.41px">Numer OmniClass</div>
<div class="a" style="left:688px;top:476.5px;width:16px;height:16.59px;background:#f2f2f2;border-bottom:1px solid #dcdcdc"></div>
<div class="a" style="left:704px;top:476.5px;width:301px;height:16.59px;background:#fff;border-bottom:1px solid #e3e3e3"></div>
<div class="vl" style="left:840px;top:476.5px;height:16.59px;background:#e3e3e3"></div>
<div class="vl" style="left:976px;top:476.5px;height:16.59px;background:#e3e3e3"></div>
<div class="a" style="left:711px;top:476.5px;width:1px;height:16.59px;background:#d0d0d0"></div>
<div class="a" style="left:711px;top:485.0px;width:16px;height:1px;background:#d0d0d0"></div>
<div class="g" style="left:730px;top:479.0px">Opis zespołu</div>
<div class="a" style="left:688px;top:493.09px;width:16px;height:16.59px;background:#f2f2f2;border-bottom:1px solid #dcdcdc"></div>
<div class="a" style="left:704px;top:493.09px;width:301px;height:16.59px;background:#fff;border-bottom:1px solid #e3e3e3"></div>
<div class="vl" style="left:840px;top:493.09px;height:16.59px;background:#e3e3e3"></div>
<div class="vl" style="left:976px;top:493.09px;height:16.59px;background:#e3e3e3"></div>
<div class="a" style="left:711px;top:493.09px;width:1px;height:16.59px;background:#d0d0d0"></div>
<div class="a" style="left:711px;top:501.59px;width:16px;height:1px;background:#d0d0d0"></div>
<div class="g" style="left:730px;top:495.59px">Tytuł OmniClass</div>
<div class="a" style="left:688px;top:509.68px;width:16px;height:16.59px;background:#f2f2f2;border-bottom:1px solid #dcdcdc"></div>
<div class="a" style="left:704px;top:509.68px;width:301px;height:16.59px;background:#fff;border-bottom:1px solid #e3e3e3"></div>
<svg style="left:704px;top:509.68px" width="16" height="17"><rect x="3.5" y="4.5" width="8" height="8" fill="#fff" stroke="#b8b8b8"/><path d="M5.5 8.5h4" stroke="#777"/></svg>
<div class="gb" style="left:721px;top:512.1800000000001px">Etapy</div>
<div class="a" style="left:688px;top:526.27px;width:16px;height:16.59px;background:#f2f2f2;border-bottom:1px solid #dcdcdc"></div>
<div class="a" style="left:704px;top:526.27px;width:301px;height:16.59px;background:#fff;border-bottom:1px solid #e3e3e3"></div>
<div class="vl" style="left:840px;top:526.27px;height:16.59px;background:#e3e3e3"></div>
<div class="vl" style="left:976px;top:526.27px;height:16.59px;background:#e3e3e3"></div>
<div class="a" style="left:711px;top:526.27px;width:1px;height:16.59px;background:#d0d0d0"></div>
<div class="a" style="left:711px;top:534.77px;width:16px;height:1px;background:#d0d0d0"></div>
<div class="g" style="left:730px;top:528.77px">Etap utworzenia</div>
<div class="g" style="left:843px;top:528.77px">Nowe konstrukcje</div>
<div class="a" style="left:688px;top:542.86px;width:16px;height:16.59px;background:#f2f2f2;border-bottom:1px solid #dcdcdc"></div>
<div class="a" style="left:704px;top:542.86px;width:301px;height:16.59px;background:#fff;border-bottom:1px solid #e3e3e3"></div>
<svg style="left:704px;top:542.86px" width="16" height="17"><rect x="3.5" y="4.5" width="8" height="8" fill="#fff" stroke="#b8b8b8"/><path d="M5.5 8.5h4" stroke="#777"/></svg>
<div class="gb" style="left:721px;top:545.36px">Inne</div>
<div class="a" style="left:688px;top:559.45px;width:16px;height:16.59px;background:#f2f2f2;border-bottom:1px solid #dcdcdc"></div>
<div class="a" style="left:704px;top:559.45px;width:301px;height:16.59px;background:#fff;border-bottom:1px solid #e3e3e3"></div>
<div class="vl" style="left:840px;top:559.45px;height:16.59px;background:#e3e3e3"></div>
<div class="vl" style="left:976px;top:559.45px;height:16.59px;background:#e3e3e3"></div>
<div class="a" style="left:711px;top:559.45px;width:1px;height:16.59px;background:#d0d0d0"></div>
<div class="a" style="left:711px;top:567.95px;width:16px;height:1px;background:#d0d0d0"></div>
<div class="g" style="left:730px;top:561.95px">Identyfikator typu</div>
<div class="g" style="left:843px;top:561.95px">Stopa: Typ A</div>
<div class="a" style="left:688px;top:576.04px;width:16px;height:16.59px;background:#f2f2f2;border-bottom:1px solid #dcdcdc"></div>
<div class="a" style="left:704px;top:576.04px;width:301px;height:16.59px;background:#fff;border-bottom:1px solid #e3e3e3"></div>
<div class="vl" style="left:840px;top:576.04px;height:16.59px;background:#e3e3e3"></div>
<div class="vl" style="left:976px;top:576.04px;height:16.59px;background:#e3e3e3"></div>
<div class="a" style="left:711px;top:576.04px;width:1px;height:16.59px;background:#d0d0d0"></div>
<div class="a" style="left:711px;top:584.54px;width:16px;height:1px;background:#d0d0d0"></div>
<div class="g" style="left:730px;top:578.54px">Kategoria</div>
<div class="g" style="left:843px;top:578.54px">Fundamenty konstrukcyjne</div>
<div class="a" style="left:688px;top:592.63px;width:16px;height:16.59px;background:#f2f2f2;border-bottom:1px solid #dcdcdc"></div>
<div class="a" style="left:704px;top:592.63px;width:301px;height:16.59px;background:#fff;border-bottom:1px solid #e3e3e3"></div>
<div class="vl" style="left:840px;top:592.63px;height:16.59px;background:#e3e3e3"></div>
<div class="vl" style="left:976px;top:592.63px;height:16.59px;background:#e3e3e3"></div>
<div class="a" style="left:711px;top:592.63px;width:1px;height:16.59px;background:#d0d0d0"></div>
<div class="a" style="left:711px;top:601.13px;width:16px;height:1px;background:#d0d0d0"></div>
<div class="g" style="left:730px;top:595.13px">Rodzina</div>
<div class="g" style="left:843px;top:595.13px">Stopa: Typ A</div>
<div class="a" style="left:688px;top:609.22px;width:16px;height:16.59px;background:#f2f2f2;border-bottom:1px solid #dcdcdc"></div>
<div class="a" style="left:704px;top:609.22px;width:301px;height:16.59px;background:#fff;border-bottom:1px solid #e3e3e3"></div>
<div class="vl" style="left:840px;top:609.22px;height:16.59px;background:#e3e3e3"></div>
<div class="vl" style="left:976px;top:609.22px;height:16.59px;background:#e3e3e3"></div>
<div class="a" style="left:711px;top:609.22px;width:1px;height:16.59px;background:#d0d0d0"></div>
<div class="a" style="left:711px;top:617.72px;width:16px;height:1px;background:#d0d0d0"></div>
<div class="g" style="left:730px;top:611.72px">Rodzina i typ</div>
<div class="g" style="left:843px;top:611.72px">Stopa: Typ A</div>
<div class="a" style="left:688px;top:625.81px;width:16px;height:16.59px;background:#f2f2f2;border-bottom:1px solid #dcdcdc"></div>
<div class="a" style="left:704px;top:625.81px;width:301px;height:16.59px;background:#fff;border-bottom:1px solid #e3e3e3"></div>
<div class="vl" style="left:840px;top:625.81px;height:16.59px;background:#e3e3e3"></div>
<div class="vl" style="left:976px;top:625.81px;height:16.59px;background:#e3e3e3"></div>
<div class="a" style="left:711px;top:625.81px;width:1px;height:16.59px;background:#d0d0d0"></div>
<div class="a" style="left:711px;top:634.31px;width:16px;height:1px;background:#d0d0d0"></div>
<div class="g" style="left:730px;top:628.31px">Typ</div>
<div class="g" style="left:843px;top:628.31px">Stopa: Typ A</div>
<div class="a" style="left:688px;top:642.4px;width:16px;height:16.59px;background:#f2f2f2;border-bottom:1px solid #dcdcdc"></div>
<div class="a" style="left:704px;top:642.4px;width:301px;height:16.59px;background:#fff;border-bottom:1px solid #e3e3e3"></div>
<svg style="left:704px;top:642.4px" width="16" height="17"><rect x="3.5" y="4.5" width="8" height="8" fill="#fff" stroke="#b8b8b8"/><path d="M5.5 8.5h4" stroke="#777"/></svg>
<div class="gb" style="left:721px;top:644.9px">Inne(Type)</div>
<div class="a" style="left:688px;top:658.99px;width:16px;height:16.59px;background:#f2f2f2;border-bottom:1px solid #dcdcdc"></div>
<div class="a" style="left:704px;top:658.99px;width:301px;height:16.59px;background:linear-gradient(#f6f8f9,#dde5ea 35%,#eef2f4 60%,#f8f3f5) 0 0/273px 100% no-repeat,#fff;border-bottom:1px solid #e3e3e3"></div>
<div class="vl" style="left:840px;top:658.99px;height:16.59px;background:#e3e3e3"></div>
<div class="vl" style="left:976px;top:658.99px;height:16.59px;background:#e3e3e3"></div>
<div class="a" style="left:711px;top:658.99px;width:1px;height:16.59px;background:#d0d0d0"></div>
<div class="a" style="left:711px;top:667.49px;width:16px;height:1px;background:#d0d0d0"></div>
<div class="g" style="left:730px;top:661.49px">Kategoria</div>
<div class="g" style="left:843px;top:661.49px">Fundamenty konstrukcyjne</div>
<div class="a" style="left:688px;top:675.58px;width:16px;height:16.59px;background:#f2f2f2;border-bottom:1px solid #dcdcdc"></div>
<div class="a" style="left:704px;top:675.58px;width:301px;height:16.59px;background:#fff;border-bottom:1px solid #e3e3e3"></div>
<div class="vl" style="left:840px;top:675.58px;height:16.59px;background:#e3e3e3"></div>
<div class="vl" style="left:976px;top:675.58px;height:16.59px;background:#e3e3e3"></div>
<div class="a" style="left:711px;top:675.58px;width:1px;height:16.59px;background:#d0d0d0"></div>
<div class="a" style="left:711px;top:684.08px;width:16px;height:1px;background:#d0d0d0"></div>
<div class="g" style="left:730px;top:678.08px">Nazwa rodziny</div>
<div class="g" style="left:843px;top:678.08px">Stopa</div>
<div class="a" style="left:688px;top:692.17px;width:16px;height:16.59px;background:#f2f2f2;border-bottom:1px solid #dcdcdc"></div>
<div class="a" style="left:704px;top:692.17px;width:301px;height:16.59px;background:#fff;border-bottom:1px solid #e3e3e3"></div>
<svg style="left:704px;top:692.17px" width="16" height="17"><rect x="3.5" y="4.5" width="8" height="8" fill="#fff" stroke="#b8b8b8"/><path d="M5.5 8.5h4" stroke="#777"/></svg>
<div class="gb" style="left:721px;top:694.67px">Konstrukcje</div>
<div class="a" style="left:688px;top:708.76px;width:16px;height:16.59px;background:#f2f2f2;border-bottom:1px solid #dcdcdc"></div>
<div class="a" style="left:704px;top:708.76px;width:301px;height:16.59px;background:#fff;border-bottom:1px solid #e3e3e3"></div>
<div class="vl" style="left:840px;top:708.76px;height:16.59px;background:#e3e3e3"></div>
<div class="vl" style="left:976px;top:708.76px;height:16.59px;background:#e3e3e3"></div>
<div class="a" style="left:711px;top:708.76px;width:1px;height:16.59px;background:#d0d0d0"></div>
<div class="a" style="left:711px;top:717.26px;width:16px;height:1px;background:#d0d0d0"></div>
<div class="a" style="left:688px;top:709px;width:318px;height:3px;background:#fff"></div>
<div class="a" style="left:1006px;top:311px;width:16px;height:400.5px;background:#f0f0f0"></div>
<div class="a" style="left:1006px;top:312.5px;width:14px;height:13px;background:#cdcdcd"></div>
<svg style="left:1006px;top:690px" width="16" height="20"><path d="M4 8l3.5 3.5 3.5-3.5" fill="none" stroke="#444" stroke-width="1.4"/></svg>
<div class="a" style="left:688px;top:711.5px;width:318px;height:15.5px;background:#ececec"></div>
<div class="a" style="left:704px;top:711.5px;width:15px;height:15.5px;background:#cbcbcb"></div>
<svg style="left:688px;top:711px" width="318" height="16"><path d="M10 4.5l-3.5 3.5 3.5 3.5" fill="none" stroke="#444" stroke-width="1.4"/><path d="M310 4.5l3.5 3.5-3.5 3.5" fill="none" stroke="#444" stroke-width="1.4"/></svg>
<div class="a" style="left:711px;top:345px;width:268px;height:20px;box-shadow:0 2px 3px rgba(0,0,0,0.25)"></div>
<div class="a" style="left:709.5px;top:342px;width:267.5px;height:21px;border:3px solid #e8474b"></div>
<div class="a" style="left:713px;top:658px;width:268px;height:20px;box-shadow:0 2px 3px rgba(0,0,0,0.25)"></div>
<div class="a" style="left:711px;top:655px;width:268px;height:22.5px;border:3px solid #e8474b"></div>
<div class="a" style="left:0;top:729px;width:1024px;height:22px;background:#234b8d"></div>
<div class="a" style="left:355px;top:731px;width:79px;height:19px;background:#aac3ea"></div>
<div class="rt" style="left:25px;top:733.5px;color:#eaf0fa;font-size:10.6px">Projekt</div>
<div class="rt" style="left:97px;top:733.5px;color:#eaf0fa;font-size:10.6px">Default</div>
<div class="rt" style="left:170px;top:733.5px;color:#eaf0fa;font-size:10.6px">Budowla</div>
<div class="rt" style="left:252px;top:733.5px;color:#eaf0fa;font-size:10.6px">Poziom 0</div>
<div class="rt" style="left:318px;top:733.5px;color:#eaf0fa;font-size:10.6px">Pale</div>
<div class="rt" style="left:359px;top:733.5px;color:#2a3a55;font-size:10.6px">Stopa:Typ A</div>
<div class="rt" style="left:890px;top:733.5px;color:#eaf0fa;font-size:10.6px">1 m</div>
<div class="rt" style="left:970px;top:733.5px;color:#eaf0fa;font-size:10.6px;letter-spacing:-0.6px">0.00s</div>
<svg style="left:0;top:729px" width="440" height="22"><g fill="#7f97c0"><path d="M66 11h4l-2 2z"/><path d="M142 11h4l-2 2z"/><path d="M222 11h4l-2 2z"/><path d="M306 11h4l-2 2z"/><path d="M347 11h4l-2 2z"/></g><path d="M425 10h4l-2 2.5z" fill="#555"/><path d="M9 5h6l3 3v10h-9z" fill="#f2f2f2" stroke="#cfd6e2" stroke-width="0.6"/><path d="M15 5v3h3" fill="#ccc"/><path d="M80 16l3-5h8l2 5z" fill="#e8e8e8"/><path d="M84 11l3-5 2 2" stroke="#e8e8e8" stroke-width="1.5" fill="none"/><rect x="154" y="6" width="10" height="12" fill="#e6e6e6"/><path d="M156 8h6M156 11h6M156 14h6" stroke="#888" stroke-width="0.8"/><path d="M235 10h12l-1 5h-10z" fill="#e8e8e8"/><rect x="238" y="11.5" width="6" height="2" fill="#555"/></svg>
</body></html>
